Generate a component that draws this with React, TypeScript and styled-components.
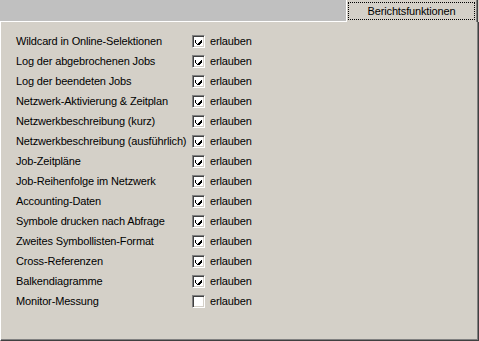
import styled, { createGlobalStyle } from "styled-components";

const GlobalStyle = createGlobalStyle`
  html, body {
    margin: 0;
    padding: 0;
    background: #d4d0c8;
  }
`;

const Window = styled.div`
  width: 479px;
  height: 341px;
  display: flex;
  flex-direction: column;
  font-family: "Liberation Sans", Arial, sans-serif;
  font-size: 11px;
  letter-spacing: -0.15px;
  color: #000;
  background: #d4d0c8;
`;

const TabStrip = styled.div`
  display: flex;
  height: 22px;
  flex-shrink: 0;
`;

const TabFiller = styled.div`
  flex: 1;
  background: #c0c0c0;
  border-bottom: 1px solid #ffffff;
`;

const Tab = styled.div`
  width: 127px;
  margin-right: 1px;
  border-left: 1px solid #ffffff;
  border-right: 1px solid #404040;
  box-shadow: inset -1px 0 0 #808080;
  background: #d4d0c8;
  padding: 2px 2px 0 1px;
`;

const TabLabel = styled.div`
  height: 16px;
  border: 1px dotted #000;
  display: flex;
  align-items: center;
  justify-content: center;
`;

const Panel = styled.div`
  flex: 1;
  border-left: 1px solid #ffffff;
  border-right: 1px solid #404040;
  border-bottom: 1px solid #404040;
  box-shadow: inset -1px -1px 0 #808080;
  padding: 9px 0 0 15px;
`;

const OptionRow = styled.div`
  display: flex;
  align-items: center;
  height: 20px;
`;

const OptionLabel = styled.span`
  width: 176px;
  white-space: nowrap;
`;

const CheckBox = styled.span`
  box-sizing: border-box;
  width: 13px;
  height: 13px;
  background: #ffffff;
  border-top: 1px solid #808080;
  border-left: 1px solid #808080;
  border-right: 1px solid #ffffff;
  border-bottom: 1px solid #ffffff;
  box-shadow: inset 1px 1px 0 #404040, inset -1px -1px 0 #d4d0c8;
  display: flex;
  align-items: center;
  justify-content: center;
  margin-right: 5px;
`;

const options: { label: string; checked: boolean }[] = [
  { label: "Wildcard in Online-Selektionen", checked: true },
  { label: "Log der abgebrochenen Jobs", checked: true },
  { label: "Log der beendeten Jobs", checked: true },
  { label: "Netzwerk-Aktivierung & Zeitplan", checked: true },
  { label: "Netzwerkbeschreibung (kurz)", checked: true },
  { label: "Netzwerkbeschreibung (ausführlich)", checked: true },
  { label: "Job-Zeitpläne", checked: true },
  { label: "Job-Reihenfolge im Netzwerk", checked: true },
  { label: "Accounting-Daten", checked: true },
  { label: "Symbole drucken nach Abfrage", checked: true },
  { label: "Zweites Symbollisten-Format", checked: true },
  { label: "Cross-Referenzen", checked: true },
  { label: "Balkendiagramme", checked: true },
  { label: "Monitor-Messung", checked: false },
];

const CheckMark = () => (
  <svg width="7" height="7" viewBox="0 0 7 7" shapeRendering="crispEdges">
    <path
      d="M0 2h1v3h1v1h1v-1h1v-1h1v-1h1v-1h1v3h-1v1h-1v1h-1v1h-1v-1h-1v-1h-1v-1h-1z"
      fill="#000"
    />
  </svg>
);

const App = () => {
  return (
    <Window>
      <GlobalStyle />
      <TabStrip>
        <TabFiller />
        <Tab>
          <TabLabel>Berichtsfunktionen</TabLabel>
        </Tab>
      </TabStrip>
      <Panel>
        {options.map((o) => (
          <OptionRow key={o.label}>
            <OptionLabel>{o.label}</OptionLabel>
            <CheckBox>{o.checked && <CheckMark />}</CheckBox>
            <span>erlauben</span>
          </OptionRow>
        ))}
      </Panel>
    </Window>
  );
};

export default App;
